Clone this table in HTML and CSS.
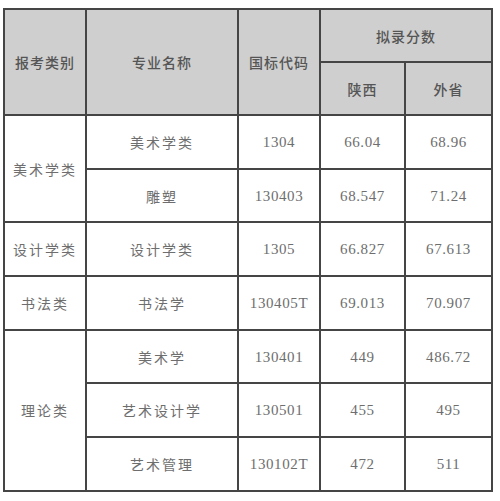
FILE: index.html
```html
<!DOCTYPE html>
<html lang="zh-CN">
<head>
<meta charset="utf-8">
<title>拟录分数</title>
<link rel="stylesheet" href="styles.css">
</head>
<body>
<table class="scores">
  <colgroup>
    <col class="c1"><col class="c2"><col class="c3"><col class="c4"><col class="c5">
  </colgroup>
  <thead>
    <tr class="h1">
      <th rowspan="2">报考类别</th>
      <th rowspan="2">专业名称</th>
      <th rowspan="2">国标代码</th>
      <th colspan="2">拟录分数</th>
    </tr>
    <tr class="h2">
      <th>陕西</th>
      <th>外省</th>
    </tr>
  </thead>
  <tbody>
    <tr>
      <td rowspan="2" class="cn">美术学类</td>
      <td class="cn">美术学类</td>
      <td class="num">1304</td>
      <td class="num">66.04</td>
      <td class="num">68.96</td>
    </tr>
    <tr>
      <td class="cn">雕塑</td>
      <td class="num">130403</td>
      <td class="num">68.547</td>
      <td class="num">71.24</td>
    </tr>
    <tr>
      <td class="cn">设计学类</td>
      <td class="cn">设计学类</td>
      <td class="num">1305</td>
      <td class="num">66.827</td>
      <td class="num">67.613</td>
    </tr>
    <tr>
      <td class="cn">书法类</td>
      <td class="cn">书法学</td>
      <td class="num">130405T</td>
      <td class="num">69.013</td>
      <td class="num">70.907</td>
    </tr>
    <tr>
      <td rowspan="3" class="cn">理论类</td>
      <td class="cn">美术学</td>
      <td class="num">130401</td>
      <td class="num">449</td>
      <td class="num">486.72</td>
    </tr>
    <tr>
      <td class="cn">艺术设计学</td>
      <td class="num">130501</td>
      <td class="num">455</td>
      <td class="num">495</td>
    </tr>
    <tr>
      <td class="cn">艺术管理</td>
      <td class="num">130102T</td>
      <td class="num">472</td>
      <td class="num">511</td>
    </tr>
  </tbody>
</table>
</body>
</html>
```

FILE: styles.css
```css
html, body {
  margin: 0;
  padding: 0;
  background: #ffffff;
}

body {
  padding: 8px 0 0 3px;
}

.scores {
  border-collapse: collapse;
  table-layout: fixed;
  width: 490px;
  font-family: "Noto Sans CJK SC", "Noto Sans", sans-serif;
  font-size: 14px;
}

.c1 { width: 82px; }
.c2 { width: 152px; }
.c3 { width: 82px; }
.c4 { width: 85px; }
.c5 { width: 87px; }

.scores th,
.scores td {
  border: 2px solid #454545;
  text-align: center;
  vertical-align: middle;
  padding: 0;
  line-height: 20px;
}

.scores th {
  background: #cfcfcf;
  color: #555555;
  font-weight: 500;
  letter-spacing: 1px;
}

.h1, .h2 { height: 53px; }

.scores tbody tr { height: 53.7px; }

.scores td {
  color: #6e6e6e;
}

.cn {
  font-weight: 400;
  letter-spacing: 2px;
}

.num {
  font-family: "Liberation Serif", "Times New Roman", serif;
  font-size: 15px;
  letter-spacing: 0.6px;
}
```
